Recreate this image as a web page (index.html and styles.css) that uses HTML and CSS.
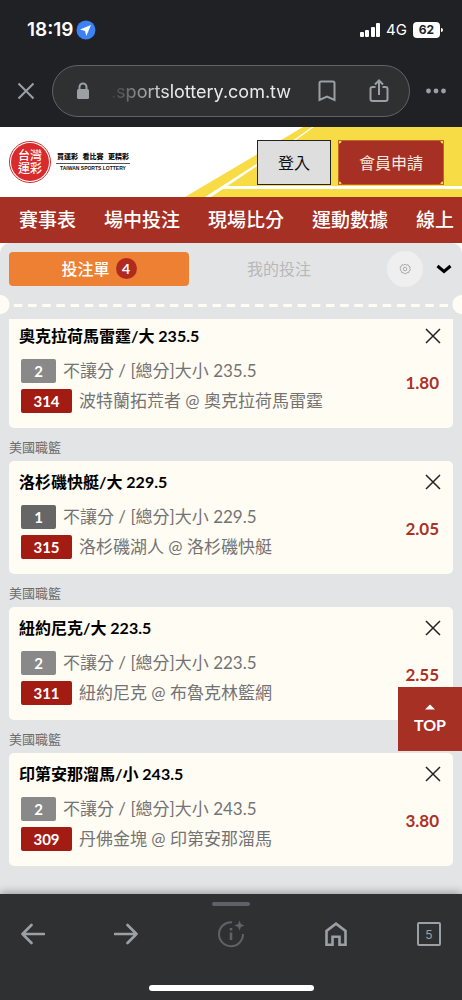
FILE: index.html
```
<!DOCTYPE html>
<html lang="zh-Hant">
<head>
    <meta charset="UTF-8">
    <meta name="viewport" content="width=device-width, initial-scale=1.0">
    <title>台灣運彩</title>
    <link rel="stylesheet" href="styles.css">
</head>
<body>
    <!-- Phone status bar -->
    <div class="status-bar">
        <span class="clock">18:19</span>
        <svg class="location" width="20" height="20" viewBox="0 0 20 20">
            <circle cx="10" cy="10" r="9.5" fill="#3b82f6"/>
            <path d="M15 5L4 9.6l5 1.3 1.3 5z" fill="#fff"/>
        </svg>
        <svg class="signal" width="22" height="16" viewBox="0 0 22 16" fill="#fff">
            <rect x="1" y="10" width="4" height="5" rx="1"/>
            <rect x="6" y="8" width="4" height="7" rx="1"/>
            <rect x="12" y="5" width="4" height="10" rx="1"/>
            <rect x="17" y="1" width="4" height="14" rx="1"/>
        </svg>
        <span class="network">4G</span>
        <span class="battery">62</span>
    </div>

    <!-- Browser toolbar -->
    <div class="toolbar">
        <button type="button" class="icon-button" aria-label="關閉">
            <svg width="18" height="18" viewBox="0 0 18 18" fill="none" stroke="#9aa0a6" stroke-width="2"><path d="M1.500 1.500l15 15M16.500 1.500l-15 15"/></svg>
        </button>
        <div class="address">
            <svg width="14" height="18" viewBox="0 0 14 18"><rect x="1" y="7" width="12" height="10" rx="1.500" fill="#9aa0a6"/><path d="M3.500 8V5a3.500 3.500 0 0 1 7 0v3" fill="none" stroke="#9aa0a6" stroke-width="2"/></svg>
            <input type="text" class="address-input" aria-label="網址" value=".sportslottery.com.tw">
            <button type="button" class="icon-button" aria-label="書籤">
                <svg width="18" height="22" viewBox="0 0 18 22" fill="none" stroke="#9aa0a6" stroke-width="2"><path d="M1.500 20V3a1.500 1.500 0 0 1 1.500-1.500h12A1.500 1.500 0 0 1 16.500 3v17L9 16.500z"/></svg>
            </button>
            <button type="button" class="icon-button share" aria-label="分享">
                <svg width="20" height="24" viewBox="0 0 20 24" fill="none" stroke="#9aa0a6" stroke-width="2"><path d="M6.500 8H3.500A2 2 0 0 0 1.500 10v10a2 2 0 0 0 2 2h13a2 2 0 0 0 2-2V10a2 2 0 0 0-2-2h-3M10 16V2M6 5.500l4-4 4 4"/></svg>
            </button>
        </div>
        <button type="button" class="icon-button" aria-label="更多">
            <svg width="22" height="6" viewBox="0 0 22 6" fill="#9aa0a6"><circle cx="3.500" cy="3" r="2.400"/><circle cx="11" cy="3" r="2.400"/><circle cx="18.500" cy="3" r="2.400"/></svg>
        </button>
    </div>

    <!-- Site header -->
    <header class="site-header">
        <svg class="stripes" width="277" height="70" viewBox="0 0 277 70">
            <path d="M0 70L118 0H277V70z" fill="#f8dc46"/>
            <path d="M20 70L110 12 127 0h2L111 13 26 70z" fill="#fff"/>
            <path d="M42 59H277v3H37z" fill="#fff"/>
        </svg>
        <a class="logo" href="#" aria-label="台灣運彩">
            <span class="logo-mark"><span class="logo-ring">台灣<br>運彩</span></span>
            <span class="logo-text">
                <span class="slogan"><span>買運彩</span><span>看比賽</span><span>更精彩</span></span>
                <span class="logo-en">TAIWAN SPORTS LOTTERY</span>
            </span>
        </a>
        <div class="account">
            <button type="button" class="login">登入</button>
            <button type="button" class="register">會員申請</button>
        </div>
    </header>

    <nav class="main-nav">
        <a href="#">賽事表</a>
        <a href="#">場中投注</a>
        <a href="#">現場比分</a>
        <a href="#">運動數據</a>
        <a href="#">線上</a>
    </nav>

    <!-- Bet slip -->
    <main class="slip-wrap">
        <div class="slip">
            <div class="slip-tabs">
                <button type="button" class="tab active">投注單 <span class="count">4</span></button>
                <button type="button" class="tab">我的投注</button>
                <button type="button" class="settings" aria-label="設定">
                    <svg width="12" height="12" viewBox="0 0 12 12" fill="none" stroke="#a3a3a3"><path d="M6 1l1.300 1.200L9 1.600l.6 1.600 1.600.7-.5 1.600.8 1.500-1.500 1-.3 1.700-1.800 0L6 11 4.600 9.800 2.800 9.700 2.500 8 1 7l.6-1.500L1 3.900l1.500-.7L3 1.600l1.700.6z" stroke-width=".9"/><circle cx="6" cy="6" r="1.800" stroke-width=".9"/></svg>
                </button>
                <button type="button" class="collapse" aria-label="收合">
                    <svg width="16" height="10" viewBox="0 0 16 10" fill="none" stroke="#000" stroke-width="3"><path d="M1.500 2L8 7.500 14.500 2"/></svg>
                </button>
            </div>
            <div class="perforation"><div class="dashes"></div></div>

            <div class="bet-list">
                <article class="bet first">
                    <div class="bet-info">
                        <h2>奧克拉荷馬雷霆/大 235.5</h2>
                        <p><span class="badge">2</span>不讓分 / [總分]大小 235.5</p>
                        <p><span class="badge code">314</span>波特蘭拓荒者 @ 奧克拉荷馬雷霆</p>
                    </div>
                    <div class="bet-side">
                        <button type="button" class="remove" aria-label="刪除"><svg width="16" height="16" viewBox="0 0 16 16" stroke="#222" stroke-width="1.500"><path d="M1 1l14 14M15 1L1 15"/></svg></button>
                        <span class="odds">1.80</span>
                    </div>
                </article>

                <h3 class="league">美國職籃</h3>
                <article class="bet">
                    <div class="bet-info">
                        <h2>洛杉磯快艇/大 229.5</h2>
                        <p><span class="badge home">1</span>不讓分 / [總分]大小 229.5</p>
                        <p><span class="badge code">315</span>洛杉磯湖人 @ 洛杉磯快艇</p>
                    </div>
                    <div class="bet-side">
                        <button type="button" class="remove" aria-label="刪除"><svg width="16" height="16" viewBox="0 0 16 16" stroke="#222" stroke-width="1.500"><path d="M1 1l14 14M15 1L1 15"/></svg></button>
                        <span class="odds">2.05</span>
                    </div>
                </article>

                <h3 class="league">美國職籃</h3>
                <article class="bet">
                    <div class="bet-info">
                        <h2>紐約尼克/大 223.5</h2>
                        <p><span class="badge">2</span>不讓分 / [總分]大小 223.5</p>
                        <p><span class="badge code">311</span>紐約尼克 @ 布魯克林籃網</p>
                    </div>
                    <div class="bet-side">
                        <button type="button" class="remove" aria-label="刪除"><svg width="16" height="16" viewBox="0 0 16 16" stroke="#222" stroke-width="1.500"><path d="M1 1l14 14M15 1L1 15"/></svg></button>
                        <span class="odds">2.55</span>
                    </div>
                </article>

                <h3 class="league">美國職籃</h3>
                <article class="bet">
                    <div class="bet-info">
                        <h2>印第安那溜馬/小 243.5</h2>
                        <p><span class="badge">2</span>不讓分 / [總分]大小 243.5</p>
                        <p><span class="badge code">309</span>丹佛金塊 @ 印第安那溜馬</p>
                    </div>
                    <div class="bet-side">
                        <button type="button" class="remove" aria-label="刪除"><svg width="16" height="16" viewBox="0 0 16 16" stroke="#222" stroke-width="1.500"><path d="M1 1l14 14M15 1L1 15"/></svg></button>
                        <span class="odds">3.80</span>
                    </div>
                </article>
            </div>
        </div>
    </main>

    <a class="top-button" href="#">
        <svg width="10" height="6" viewBox="0 0 10 6"><path d="M5 0.500L10 5.500H0z" fill="#fff"/></svg>
        TOP
    </a>

    <!-- Browser bottom bar -->
    <footer class="bottom-bar">
        <div class="handle"></div>
        <div class="bottom-icons">
            <button type="button" class="icon-button" aria-label="上一頁">
                <svg width="24" height="22" viewBox="0 0 24 22" fill="none" stroke="#9aa0a6" stroke-width="2.600" stroke-linecap="round" stroke-linejoin="round"><path d="M23 11H1.500M10.500 2l-9 9 9 9"/></svg>
            </button>
            <button type="button" class="icon-button" aria-label="下一頁">
                <svg width="24" height="22" viewBox="0 0 24 22" fill="none" stroke="#9aa0a6" stroke-width="2.600" stroke-linecap="round" stroke-linejoin="round"><path d="M1 11h21.500M13.500 2l9 9-9 9"/></svg>
            </button>
            <button type="button" class="icon-button wide" aria-label="頁面資訊">
                <svg width="28" height="28" viewBox="0 0 28 28" fill="none" stroke="#5f6368" stroke-width="2"><path d="M15 2.200A12 12 0 1 0 26 14"/><path d="M14 12.500V20M14 8v2.500" stroke-width="2.600"/><path d="M22.500 0.500l1.400 3.600L27.500 5.500l-3.600 1.400-1.400 3.600-1.400-3.600-3.600-1.400 3.600-1.400z" fill="#5f6368" stroke="none"/></svg>
            </button>
            <button type="button" class="icon-button" aria-label="首頁">
                <svg width="24" height="26" viewBox="0 0 24 26" fill="none" stroke="#9aa0a6" stroke-width="2.600"><path d="M2.500 23.700V10L12 2.700 21.500 10v13.700h-6v-8h-7v8z"/></svg>
            </button>
            <button type="button" class="icon-button tab-count" aria-label="分頁">5</button>
        </div>
        <div class="home-indicator"></div>
    </footer>
</body>
</html>
```
FILE: styles.css
```
* {
    box-sizing: border-box;
}

body {
    margin: 0;
    min-height: 100vh;
    display: flex;
    flex-direction: column;
    font-family: Lato, "Noto Sans CJK TC", sans-serif;
    background-color: #202124;
}

button, input {
    font-family: inherit;
    border: none;
    padding: 0;
    background: none;
    color: inherit;
}

a {
    color: inherit;
    text-decoration: none;
}

svg {
    display: block;
    flex-shrink: 0;
}

.icon-button {
    display: flex;
    align-items: center;
    justify-content: center;
    width: 24px;
    height: 32px;
    flex-shrink: 0;
}

/* Status bar */
.status-bar {
    display: flex;
    align-items: center;
    height: 59px;
    padding: 0 22px 0 27px;
    color: #fff;
    font-family: Inter, sans-serif;
}

.clock {
    font-size: 19px;
    font-weight: 600;
}

.location {
    margin-left: 3px;
}

.signal {
    margin-left: auto;
}

.network {
    margin: 0 6px 0 5px;
    font-size: 15px;
}

.battery {
    position: relative;
    width: 27px;
    line-height: 16px;
    border-radius: 4px;
    background-color: #fff;
    color: #202124;
    font-size: 12px;
    font-weight: 700;
    text-align: center;
}

.battery::after {
    content: "";
    position: absolute;
    top: 6px;
    right: -3px;
    width: 2px;
    height: 4px;
    border-radius: 0 2px 2px 0;
    background-color: #fff;
}

/* Toolbar */
.toolbar {
    display: flex;
    align-items: center;
    height: 68px;
    padding: 6px 14px 10px;
}

.address {
    display: flex;
    flex: 1;
    align-items: center;
    height: 52px;
    min-width: 0;
    margin: 0 14px;
    padding: 0 18px 0 23px;
    border: 1px solid #5f6368;
    border-radius: 26px;
    background-color: #2f3032;
}

.address-input {
    flex: 1;
    min-width: 0;
    margin: 0 24px 0 18px;
    color: #e8eaed;
    font-family: Inter, sans-serif;
    font-size: 18px;
    text-align: right;
    -webkit-mask-image: linear-gradient(to right, transparent, #000 60px);
    mask-image: linear-gradient(to right, transparent, #000 60px);
}

.share {
    margin-left: 28px;
}

/* Site header */
.site-header {
    position: relative;
    display: flex;
    align-items: center;
    justify-content: space-between;
    height: 70px;
    padding: 0 18px 0 9px;
    background-color: #fff;
}

.stripes {
    position: absolute;
    top: 0;
    right: 0;
}

.logo {
    display: flex;
    align-items: center;
    gap: 5px;
}

.logo-mark {
    padding: 1px;
    border: 1px solid #d92b2b;
    border-radius: 50%;
}

.logo-ring {
    display: block;
    width: 38px;
    height: 38px;
    padding-top: 6px;
    border-radius: 50%;
    background-color: #d92b2b;
    color: #fff;
    font-size: 12px;
    font-weight: 500;
    line-height: 13px;
    text-align: center;
}

.logo-text {
    display: flex;
    flex-direction: column;
    width: 74px;
    color: #111;
    text-align: center;
}

.slogan {
    display: flex;
    justify-content: space-between;
    padding: 0 1px 2px;
    border-bottom: 1px solid #555;
    font-size: 7px;
    font-weight: 900;
    line-height: 10px;
}

.logo-en {
    font-family: "Liberation Sans", Arial, sans-serif;
    font-size: 5px;
    font-weight: 700;
    line-height: 9px;
    white-space: nowrap;
}

.account {
    position: relative;
    display: flex;
    gap: 7px;
}

.login, .register {
    height: 45px;
    font-size: 16px;
}

.login {
    width: 74px;
    border: 1px solid #222;
    background-color: #dedede;
    color: #111;
}

.register {
    width: 106px;
    border: 1px solid #c0642a;
    background:
        radial-gradient(circle at 0 0, #f8dc46 2px, transparent 3px),
        radial-gradient(circle at 100% 0, #f8dc46 2px, transparent 3px),
        radial-gradient(circle at 0 100%, #f8dc46 2px, transparent 3px),
        radial-gradient(circle at 100% 100%, #f8dc46 2px, transparent 3px),
        #a63024;
    color: #fbe9df;
}

/* Navigation */
.main-nav {
    display: flex;
    align-items: center;
    gap: 28px;
    height: 46px;
    padding: 0 0 3px 19px;
    overflow: hidden;
    background-color: #a63024;
    color: #fff;
    font-size: 19px;
    font-weight: 500;
    white-space: nowrap;
}

/* Bet slip */
.slip-wrap {
    flex: 1;
    background-color: #fffcf4;
}

.slip {
    height: 100%;
    border-radius: 10px 10px 0 0;
    background-color: #e3e4e6;
}

.slip-tabs {
    display: flex;
    align-items: center;
    height: 52px;
    padding: 0 10px 0 9px;
}

.tab {
    flex: 1;
    height: 34px;
    padding-bottom: 2px;
    border-radius: 4px;
    color: #b8b8b8;
    font-size: 16px;
}

.tab.active {
    display: flex;
    align-items: center;
    justify-content: center;
    gap: 6px;
    background-color: #ed8032;
    color: #fff;
    font-weight: 500;
}

.count {
    width: 21px;
    height: 21px;
    border-radius: 50%;
    background-color: #b02a20;
    font-size: 14px;
    font-weight: 700;
    line-height: 21px;
}

.settings {
    display: flex;
    align-items: center;
    justify-content: center;
    width: 36px;
    height: 36px;
    margin: 0 13px 0 18px;
    border-radius: 50%;
    background-color: #efefef;
}

.perforation {
    height: 19px;
    padding: 9px 11px 0;
    background:
        radial-gradient(circle at 0 50%, #fffcf4 9px, transparent 10px),
        radial-gradient(circle at 100% 50%, #fffcf4 9px, transparent 10px);
}

.dashes {
    height: 3px;
    background-image: linear-gradient(to right, transparent 3px, #fffcf4 3px 11px, transparent 11px);
    background-size: 14px 3px;
    background-repeat: round;
}

.bet-list {
    padding: 5px 9px 28px;
}

.bet {
    display: flex;
    justify-content: space-between;
    height: 113px;
    padding: 9px 12px 12px 10px;
    border-radius: 5px;
    background-color: #fffcf4;
}

.bet.first {
    height: 109px;
    padding-top: 5px;
    border-radius: 0 0 5px 5px;
}

.bet h2 {
    margin: 0 0 11px;
    color: #000;
    font-size: 16px;
    font-weight: 700;
    line-height: 24px;
}

.bet p {
    display: flex;
    align-items: center;
    height: 24px;
    margin: 0 0 6px 2px;
    color: #737373;
    font-size: 17px;
    line-height: 22px;
    white-space: nowrap;
}

.badge {
    width: 35px;
    margin-right: 7px;
    border-radius: 2px;
    background-color: #898989;
    color: #fff;
    font-size: 15px;
    font-weight: 700;
    line-height: 24px;
    text-align: center;
}

.badge.home {
    background-color: #666;
}

.badge.code {
    width: 51px;
    background-color: #a31c14;
}

.bet-side {
    display: flex;
    flex-direction: column;
    align-items: flex-end;
}

.remove {
    padding: 4px 0;
}

.odds {
    margin: 23px 2px 0 0;
    color: #ab3226;
    font-size: 17px;
    font-weight: 700;
    line-height: 24px;
}

.league {
    margin: 0;
    padding-top: 5px;
    height: 33px;
    color: #6c6c6c;
    font-size: 13px;
    font-weight: 400;
    line-height: 28px;
}

.top-button {
    position: fixed;
    right: 0;
    bottom: 249px;
    display: flex;
    flex-direction: column;
    align-items: center;
    justify-content: center;
    gap: 5px;
    width: 64px;
    height: 64px;
    background-color: #a63024;
    color: #fff;
    font-size: 16px;
    font-weight: 700;
    line-height: 20px;
}

/* Bottom bar */
.bottom-bar {
    position: relative;
    height: 107px;
    padding-top: 8px;
    background-color: #2f3032;
    box-shadow: 0 -2px 8px rgba(0, 0, 0, 0.3);
}

.handle {
    width: 38px;
    height: 4px;
    margin: 0 auto;
    border-radius: 2px;
    background-color: #5f6168;
}

.bottom-icons {
    display: flex;
    align-items: center;
    justify-content: space-between;
    margin-top: 12px;
    padding: 0 21px;
}

.wide {
    width: 48px;
}

.tab-count {
    height: 24px;
    border: 2px solid #9aa0a6;
    border-radius: 2px;
    color: #9aa0a6;
    font-family: Inter, sans-serif;
    font-size: 12px;
}

.home-indicator {
    width: 165px;
    height: 6px;
    margin: 35px auto 0;
    border-radius: 3px;
    background-color: #fff;
}
```
